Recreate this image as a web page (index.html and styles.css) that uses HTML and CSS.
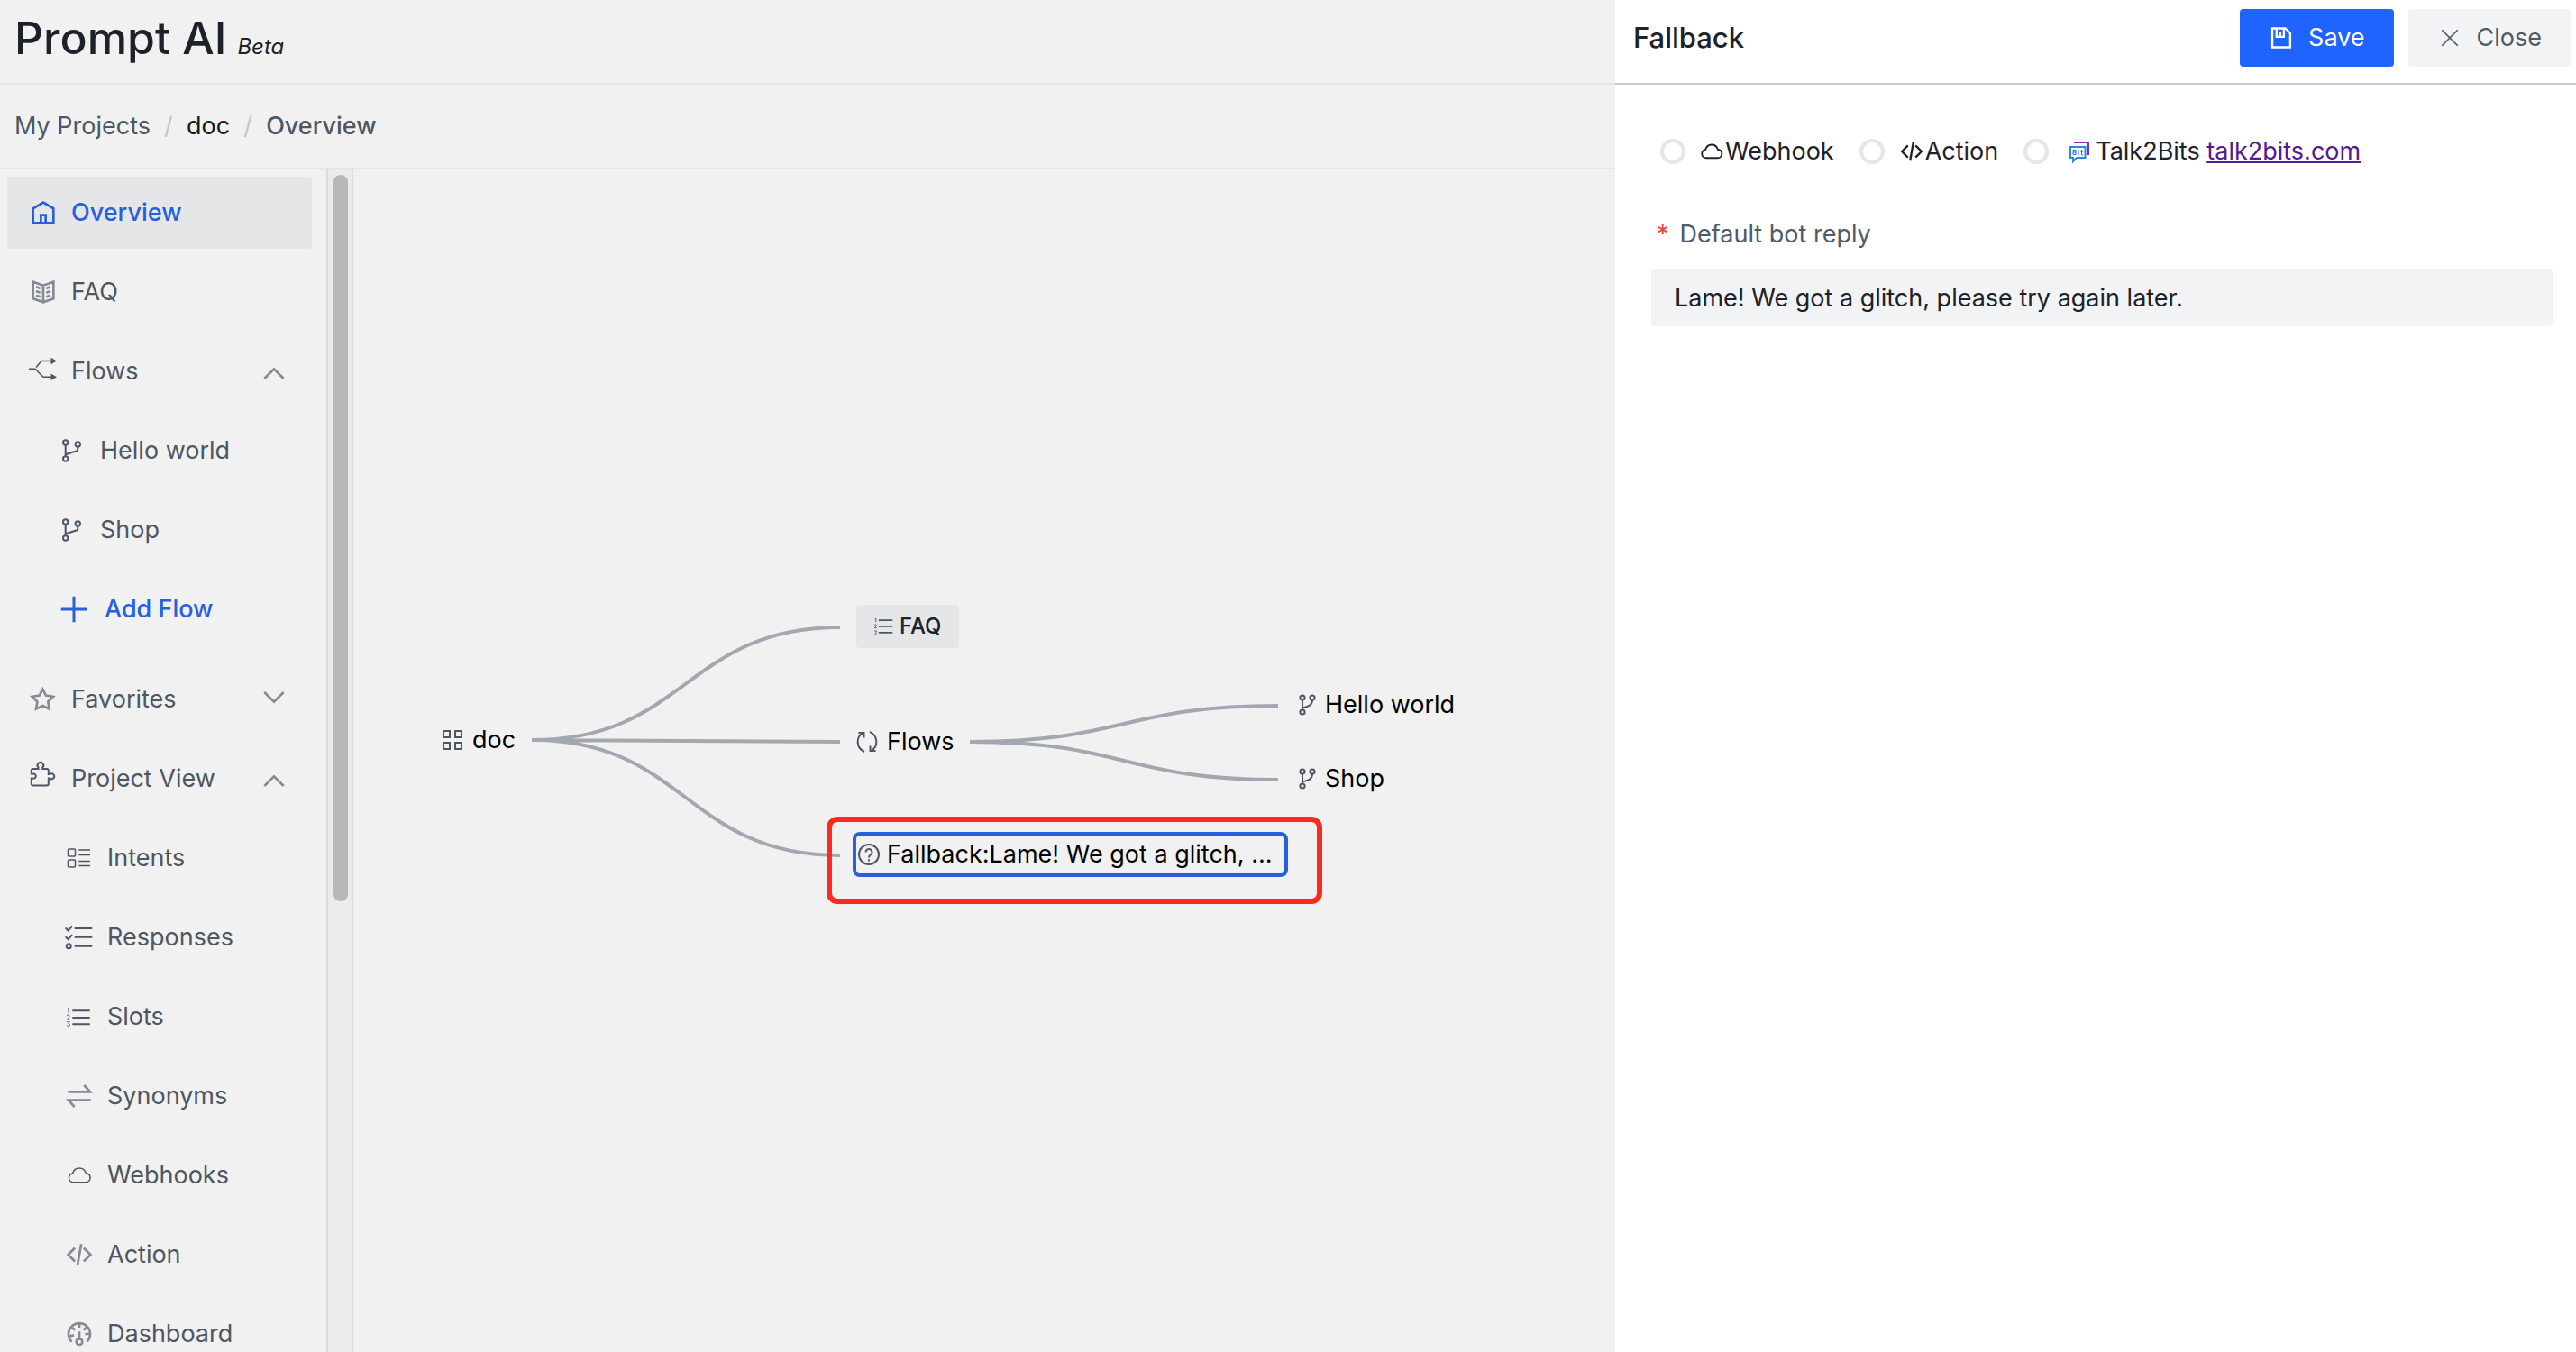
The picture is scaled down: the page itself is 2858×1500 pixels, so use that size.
FILE: index.html
```html
<!DOCTYPE html>
<html lang="en">
<head>
<meta charset="utf-8">
<title>Prompt AI</title>
<link rel="stylesheet" href="styles.css">
</head>
<body>
<svg class="sprite" aria-hidden="true">
  <symbol id="branch" viewBox="0 0 32 32"><circle cx="8.7" cy="7" r="2.7"/><circle cx="22.3" cy="9" r="2.7"/><circle cx="8.7" cy="25" r="2.7"/><path d="M8.7 9.700v12.600M22.300 11.700v3.300q0 1-1 1.300L8.700 20.300"/></symbol>
  <symbol id="fork" viewBox="0 0 28 28"><circle cx="11" cy="6" r="2.600"/><circle cx="22" cy="6" r="2.600"/><circle cx="11" cy="22" r="2.600"/><path d="M11 8.600v10.800M22 8.600c0 5-3 7-11 8.700"/></symbol>
  <symbol id="chevron" viewBox="0 0 48 48"><path d="M40 36 24 20 8 36"/></symbol>
  <symbol id="cloud" viewBox="0 0 32 32"><path d="M9.500 23.700C6.500 23.700 4.500 21.600 4.500 18.800c0-2.500 1.700-4.500 4.200-5C9.800 10 12.600 8 16 8s6.200 2 7.300 5.600c2.900.5 4.800 2.500 4.800 5.200 0 2.800-2.100 4.900-5.100 4.900Z"/></symbol>
  <symbol id="code" viewBox="0 0 48 48"><path d="M16.700 12.700 5.400 24l11.300 11.300m14.600-22.600L42.600 24 31.300 35.300M27.200 6.300l-6.300 35.400"/></symbol>
</svg>
<div class="app">
  <div class="workspace">
    <header class="brand"><h1>Prompt AI</h1><em>Beta</em></header>
    <nav class="crumbs" aria-label="Breadcrumb">
      <a href="#">My Projects</a><span class="slash">/</span><a href="#" class="crumb-project">doc</a><span class="slash">/</span><span class="crumb-here">Overview</span>
    </nav>
    <div class="body">
      <nav class="sidebar" aria-label="Project">
        <a href="#" class="item active"><svg class="icon" viewBox="0 0 48 48"><path class="w4" d="M7 17 24 7l17 10v24H7V17Z"/><path class="w4" d="M20 28h8v13h-8V28Z"/></svg>Overview</a>
        <a href="#" class="item"><svg class="icon soft" viewBox="0 0 48 48"><path class="w4" d="M24 13 7 7v28l17 6 17-6V7l-17 6Zm0 0v27.500M29 18l7-2.500M29 25l7-2.500M29 32l7-2.500M19 18l-7-2.500m7 9.500-7-2.500m7 9.500-7-2.500"/></svg>FAQ</a>
        <button type="button" class="item"><svg class="icon thin" viewBox="0 0 32 32"><path d="M0 13.300h7l9 9h9M8 11.500l6-7h11"/><path class="solid" d="M24.500.7 31 4.500l-6.500 3.800ZM24.500 18.500l6.500 3.800-6.500 3.800Z"/></svg>Flows<svg class="icon soft arrow"><use href="#chevron"/></svg></button>
        <a href="#" class="item flow"><svg class="icon"><use href="#branch"/></svg>Hello world</a>
        <a href="#" class="item flow"><svg class="icon"><use href="#branch"/></svg>Shop</a>
        <button type="button" class="item flow add"><svg class="icon plus" viewBox="0 0 48 48"><path class="w4" d="M5 24h38M24 5v38"/></svg>Add Flow</button>
        <button type="button" class="item"><svg class="icon soft" viewBox="0 0 48 48"><path class="w4" d="m23 7 5.400 10.300 12.100 1.900-8.600 8.600 2 12L23 34.500 12.100 39.800l2-12-8.600-8.600 12.100-1.900Z"/></svg>Favorites<svg class="icon soft arrow down"><use href="#chevron"/></svg></button>
        <button type="button" class="item"><svg class="icon" viewBox="0 0 32 32"><path d="M2.800 10.500V7q0-2 2-2h5.700V3.500a3.300 3.300 0 1 1 4.800 0V5h4.500q2 0 2 2v4h1.700a2.900 2.900 0 1 1 0 4.600h-1.700v6q0 2-2 2h-15q-2 0-2-2v-6h1.700a2.600 2.600 0 1 0 0-5Z"/></svg>Project View<svg class="icon soft arrow"><use href="#chevron"/></svg></button>
        <a href="#" class="item view"><svg class="icon thin" viewBox="0 0 32 32"><rect x="3.500" y="6" width="8" height="8" rx="1"/><rect x="3.500" y="18" width="8" height="8" rx="1"/><path d="M15.300 7H28M15.300 12.500H28M15.300 19.500H28M15.300 24.500H28"/></svg>Intents</a>
        <a href="#" class="item view"><svg class="icon" viewBox="0 0 32 32"><path d="M10.700 6h19.600M10.700 15.700h19.600M10.700 25.700h19.600M.7 5.500l3 3L8 3.500M.7 15.200l3 3L8 13.200"/><circle cx="4.300" cy="25.700" r="2.500"/></svg>Responses</a>
        <a href="#" class="item view"><svg class="icon" viewBox="0 0 32 32"><path d="M8.300 9.300h19.400M8.300 17h19.400M8.300 24.300h19.400"/><path class="digit" d="M2.500 7.500 4 6.500v5.300M2.200 15.200q0-1.200 1.500-1.200t1.500 1.300q0 .9-3 3.700h3.200M2.200 21.700h3l-1.500 1.900q1.700.2 1.700 1.500t-1.700 1.300-1.700-.9"/></svg>Slots</a>
        <a href="#" class="item view"><svg class="icon soft" viewBox="0 0 48 48"><path class="w4" d="M5 17h37L32 6M43 31H6l10 11"/></svg>Synonyms</a>
        <a href="#" class="item view"><svg class="icon thin"><use href="#cloud"/></svg>Webhooks</a>
        <a href="#" class="item view"><svg class="icon soft wide"><use href="#code"/></svg>Action</a>
        <a href="#" class="item view"><svg class="icon soft" viewBox="0 0 48 48"><path class="w4" d="M11.400 37A18 18 0 1 1 36.600 37M24 6v7.500M41.800 24h-8.300M37.200 12 31 17.500M10.500 12.400l6.500 5.100M6.500 28l8.500-2M24 32V20"/><circle class="w4" cx="24" cy="37" r="5"/></svg>Dashboard</a>
      </nav>
      <div class="track"><div class="thumb"></div></div>
      <main class="canvas">
        <svg class="links" aria-hidden="true"><path d="M198 633C369 633 369 508 540 508M198 633 540 635M198 633C369 633 369 761 540 761M684 635C855 635 855 595 1026 595M684 635C855 635 855 677 1026 677"/></svg>
        <div class="node root"><svg viewBox="0 0 28 28"><path d="M4 4h7v7H4ZM17 4h7v7h-7ZM4 17h7v7H4ZM17 17h7v7h-7Z"/></svg>doc</div>
        <button type="button" class="node faq"><svg viewBox="0 0 28 28"><path d="M8 6h18M8 14h18M8 22h18"/><path class="digit" d="M3 4.500 4.500 3.500v5M2.500 12q1.500-1.500 2.500 0t-2.500 4h3M2.500 20h3L4 22q3 1.500-1.500 2.500"/></svg>FAQ</button>
        <div class="node flows"><svg viewBox="0 0 28 28"><path d="M11 25C2 21 1 9 9.500 4M4.500 4h6v5.500M17 3c9 4 10 16 1.500 21M23.500 24h-6v-5.500"/></svg>Flows</div>
        <div class="node hello"><svg><use href="#fork"/></svg>Hello world</div>
        <div class="node shop"><svg><use href="#fork"/></svg>Shop</div>
        <div class="node fallback"><svg viewBox="0 0 28 28"><circle cx="14" cy="14" r="11"/><path d="M10.500 11.500a3.500 3.500 0 1 1 5.300 3q-1.800 1-1.800 3M14 19.300v2.200"/></svg>Fallback:Lame! We got a glitch, ...</div>
        <div class="highlight"></div>
      </main>
    </div>
  </div>
  <aside class="panel">
    <header class="panel-head">
      <h2>Fallback</h2>
      <button type="button" class="btn primary"><svg viewBox="0 0 48 48"><path d="M7 6h25l9 9v27H7ZM15 6v16h14V6M22 12v10"/></svg>Save</button>
      <button type="button" class="btn"><svg viewBox="0 0 48 48"><path class="cross" d="m9 9 30 30M39 9 9 39"/></svg>Close</button>
    </header>
    <form class="form">
      <div class="choices">
        <label><input type="radio" name="kind"><svg><use href="#cloud"/></svg>Webhook</label>
        <label><input type="radio" name="kind"><svg class="code"><use href="#code"/></svg>Action</label>
        <label><input type="radio" name="kind"><svg class="bits" viewBox="0 0 28 28"><path class="purple" d="M8 4h16v14"/><path class="azure" d="M4 9h16.500v12H11l-4 4v-4H4Z"/><path class="word" d="M7 12.500v5h3v-5Zm0 2.500h3M13 14.500v4M13 12v1M16.500 12v6h1.500M15 14h3.500"/></svg><span>Talk2Bits <a href="#">talk2bits.com</a></span></label>
      </div>
      <label class="field-label" for="reply"><span class="star">*</span>Default bot reply</label>
      <input id="reply" class="field" type="text" value="Lame! We got a glitch, please try again later.">
    </form>
  </aside>
</div>
</body>
</html>
```
FILE: styles.css
```css
* { box-sizing: border-box; }
body {
  margin: 0;
  font: 400 27px/44px Inter, "Noto Sans", sans-serif;
  color: #1d2129;
  background: #f1f1f1;
}
button, input { font: inherit; color: inherit; margin: 0; }
a { color: inherit; text-decoration: none; }
svg { flex: none; fill: none; stroke: currentColor; stroke-width: 2; overflow: visible; }
.sprite { position: absolute; width: 0; height: 0; }

.app { display: grid; grid-template-columns: minmax(0, 1fr) 37.3%; height: 100vh; overflow: hidden; }
.workspace { display: flex; flex-direction: column; min-width: 0; min-height: 0; }

.brand { display: flex; align-items: baseline; gap: 12px; height: 94px; padding: 12px 16px 0; border-bottom: 2px solid #e4e5e7; }
.brand h1 { margin: 0; font-size: 50px; line-height: 60px; font-weight: 500; }
.brand em { font-size: 24px; }
.crumbs { display: flex; align-items: center; height: 94px; padding: 0 16px; border-bottom: 2px solid #e4e5e7; color: #4e5663; }
.slash { width: 40px; text-align: center; color: #c2c6cd; }
.crumb-project { color: #17191d; }
.crumb-here { font-weight: 500; }

.body { flex: 1; display: flex; min-height: 0; }
.sidebar { width: 362px; flex: none; display: flex; flex-direction: column; gap: 8px; padding: 8px 16px 0 8px; overflow: hidden; }
.item { flex: none; display: flex; align-items: center; gap: 15px; height: 80px; padding: 0 26px 0 24px; border: 0; border-radius: 4px; background: none; color: #4e5663; text-align: left; }
.item.active { background: #e5e6e8; color: #2860dc; font-weight: 500; }
.item.flow { padding-left: 56px; }
.item.view { padding-left: 64px; }
.item.add { gap: 16px; margin-bottom: 12px; color: #2860dc; font-weight: 500; }
.icon { width: 32px; height: 32px; }
.icon.plus { width: 36px; height: 36px; }
.icon.thin { stroke-width: 1.5; }
.soft { color: #858b95; }
.w4, #chevron, #code { stroke-width: 4; }
.solid { fill: currentColor; stroke: none; }
.digit { stroke-width: 1; }
.arrow { margin-left: auto; }
.down { transform: rotate(180deg); }

.track { width: 30px; flex: none; padding: 6px; border: solid #dadada; border-width: 0 2px; background: #ebebeb; }
.thumb { width: 16px; height: 62%; border-radius: 8px; background: #b8b8b8; }

.canvas { position: relative; flex: 1; min-width: 0; overflow: hidden; color: #000; }
.links { position: absolute; width: 100%; height: 100%; stroke: #a3a7b0; stroke-width: 4; }
.node { position: absolute; display: flex; align-items: center; gap: 8px; height: 48px; white-space: nowrap; }
.node svg { width: 28px; height: 28px; color: #4e5663; }
.root { left: 96px; top: 609px; }
.faq { left: 558px; top: 483px; width: 114px; padding: 0 0 0 18px; gap: 6px; border: 0; border-radius: 4px; background: #e5e6e8; color: #1d2129; font-size: 24px; font-weight: 500; }
.faq svg { width: 24px; height: 24px; }
.flows { left: 556px; top: 611px; }
.hello { left: 1042px; top: 570px; }
.shop { left: 1042px; top: 652px; }
.fallback { left: 554px; top: 735px; width: 483px; height: 50px; gap: 6px; border: 4px solid #2860dc; border-radius: 8px; }
.highlight { position: absolute; left: 525px; top: 718px; width: 550px; height: 97px; border: 6px solid #fb2c1e; border-radius: 12px; }

.panel { background: #fff; min-width: 0; }
.panel-head { display: flex; align-items: center; gap: 16px; height: 94px; padding: 0 6px 8px 20px; border-bottom: 2px solid #c9c9c9; }
.panel-head h2 { flex: 1; margin: 0; font-size: 31px; font-weight: 500; }
.btn { display: flex; align-items: center; gap: 16px; height: 64px; padding: 0 32px; border: 0; border-radius: 4px; background: #f2f3f5; color: #4e5969; }
.btn svg { width: 28px; height: 28px; stroke-width: 4; }
.btn .cross { stroke-width: 3; }
.btn.primary { background: #2064ff; color: #fff; }

.form { padding: 52px 26px 0 40px; }
.choices { display: flex; padding-left: 10px; gap: 28px; }
.choices label { display: flex; align-items: center; }
.choices input { appearance: none; width: 28px; height: 28px; margin-right: 14px; border: 4px solid #e5e6eb; border-radius: 50%; background: #fff; }
.choices svg { width: 30px; height: 30px; }
.choices .code { width: 28px; height: 28px; margin: 0 1px 0 2px; }
.choices .bits { width: 28px; height: 28px; margin: 0 4px 0 6px; }
.choices a { color: #551a8b; text-decoration: underline; }
.purple { stroke: #8a2da5; }
.azure { stroke: #2a86e8; }
.word { stroke: #2a6fd6; stroke-width: 1; }
.field-label { display: flex; gap: 12px; margin-top: 48px; padding-left: 6px; color: #4e5969; }
.star { color: #f53f3f; }
.field { display: block; width: 100%; height: 64px; margin-top: 16px; padding: 0 26px; border: 0; border-radius: 4px; background: #f2f3f5; color: #1d2129; }
```
